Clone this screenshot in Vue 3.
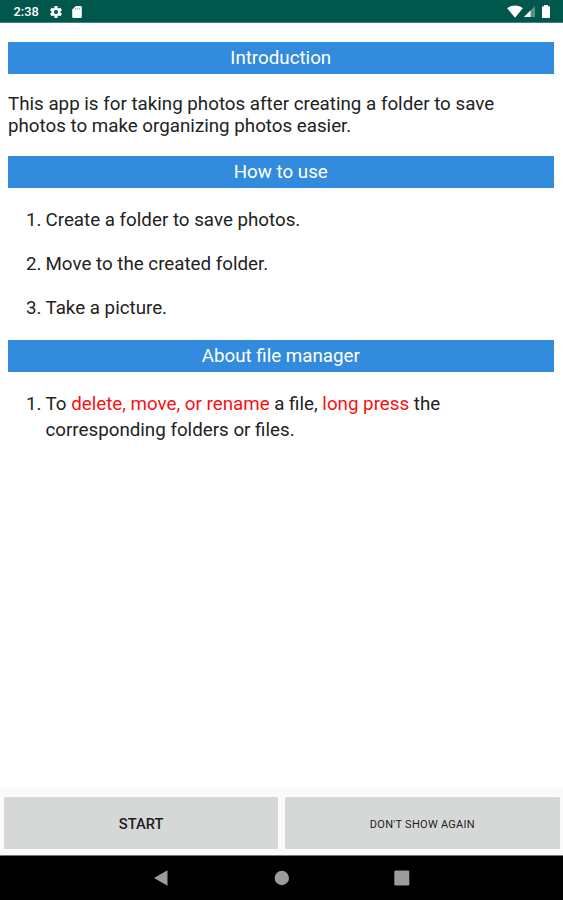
<script setup>
const steps = [
  'Create a folder to save photos.',
  'Move to the created folder.',
  'Take a picture.',
]
</script>

<template>
  <div class="screen">
    <header class="status-bar">
      <span class="clock">2:38</span>
      <svg class="gear" viewBox="2 2 20 20">
        <path d="M19.43 12.98c.04-.32.07-.64.07-.98s-.03-.66-.07-.98l2.11-1.65c.19-.15.24-.42.12-.64l-2-3.46c-.12-.22-.39-.3-.61-.22l-2.49 1c-.52-.4-1.08-.73-1.69-.98l-.38-2.65A.49.49 0 0 0 14 2h-4c-.25 0-.46.18-.49.42l-.38 2.65c-.61.25-1.17.59-1.69.98l-2.49-1c-.23-.09-.49 0-.61.22l-2 3.46c-.13.22-.07.49.12.64l2.11 1.65c-.04.32-.07.65-.07.98s.03.66.07.98l-2.11 1.65c-.19.15-.24.42-.12.64l2 3.46c.12.22.39.3.61.22l2.49-1c.52.4 1.08.73 1.69.98l.38 2.65c.03.24.24.42.49.42h4c.25 0 .46-.18.49-.42l.38-2.65c.61-.25 1.17-.59 1.69-.98l2.49 1c.23.09.49 0 .61-.22l2-3.46c.12-.22.07-.49-.12-.64l-2.11-1.65zM12 15.5a3.5 3.5 0 1 1 0-7 3.5 3.5 0 0 1 0 7z" />
      </svg>
      <svg class="sd" viewBox="4 2 16 20">
        <path d="M18 2h-8L4 8v12a2 2 0 0 0 2 2h12a2 2 0 0 0 2-2V4a2 2 0 0 0-2-2z" />
        <path class="pins" d="M9.5 5v3M12.7 5v3M16 5v3" />
      </svg>
      <span class="spacer" />
      <svg class="wifi" viewBox="0 0 16 13">
        <path d="M8 12.800.2 3.200C2.400 1.500 5 .6 8 .6s5.600.9 7.800 2.600z" />
      </svg>
      <svg class="signal" viewBox="0 0 11 11">
        <path opacity=".35" d="M11 0v11H0z" />
        <path d="M6.500 4.500V11H0z" />
      </svg>
      <svg class="battery" viewBox="0 0 8 13">
        <path d="M2 0h4v1.200H7.200a.8.8 0 0 1 .8.8v10.200a.8.8 0 0 1-.8.8H.8a.8.8 0 0 1-.8-.8V2a.8.8 0 0 1 .8-.8H2z" />
      </svg>
    </header>

    <main class="content">
      <h2>Introduction</h2>
      <p>This app is for taking photos after creating a folder to save<br>photos to make organizing photos easier.</p>

      <h2>How to use</h2>
      <ol class="steps">
        <li v-for="(step, i) in steps" :key="step">
          <span class="num">{{ i + 1 }}.</span>
          <span>{{ step }}</span>
        </li>
      </ol>

      <h2>About file manager</h2>
      <ol class="about">
        <li>
          <span class="num">1.</span>
          <span>To <em>delete, move, or rename</em> a file, <em>long press</em> the<br>corresponding folders or files.</span>
        </li>
      </ol>
    </main>

    <footer class="actions">
      <button class="start">START</button>
      <button class="dismiss">DON'T SHOW AGAIN</button>
    </footer>

    <nav class="nav-bar">
      <svg viewBox="0 0 16 16"><path d="M13.500 .3v15.400L0 8z" /></svg>
      <svg viewBox="0 0 16 16"><circle cx="7.800" cy="8" r="7.200" /></svg>
      <svg viewBox="0 0 16 16"><rect x=".3" y=".5" width="15" height="15" rx="1.300" /></svg>
    </nav>
  </div>
</template>

<style>
body { margin:0; }
</style>

<style scoped>
.screen {
  display:flex; flex-direction:column;
  width:563px; height:900px; overflow:hidden;
  background:#fff; color:#222;
  font-family:Roboto, sans-serif;
}

.status-bar {
  box-sizing:border-box; flex:none;
  display:flex; align-items:center;
  height:23px; padding:1px 13px 0 13.500px;
  background:#00574b; border-bottom:1px solid #4d8177;
}
.status-bar svg { fill:#fff; flex:none; }
.clock { width:36.500px; color:#fff; font-size:12.800px; font-weight:500; line-height:20px; padding-top:1px; }
.gear { width:12px; height:12px; }
.sd { width:10px; height:12px; margin-left:10px; }
.sd .pins { stroke:#00574b; stroke-width:1.200; opacity:.6; }
.spacer { flex:1; }
.wifi { width:16px; height:13px; }
.signal { width:11px; height:11px; margin-left:1px; }
.battery { width:8px; height:13px; margin-left:7px; }

.content { flex:1; padding:19px 9.500px 0 8px; }
h2 {
  box-sizing:border-box; height:31.500px; margin:0; padding-top:1px;
  background:#328bdd; color:#fff;
  font-size:18.750px; font-weight:400; line-height:31.500px; text-align:center;
}
p { margin:19px 0 18.500px; font-size:18.760px; line-height:22.500px; white-space:nowrap; }
ol { margin:0; padding:0 0 0 18px; list-style:none; font-size:18.750px; }
li { display:flex; white-space:nowrap; }
.num { flex:none; width:19.500px; }
.steps { padding-top:10.500px; padding-bottom:10px; }
.steps li { line-height:44px; }
.about { padding-top:19.500px; }
.about li { line-height:26px; }
em { color:#fb1010; font-style:normal; }

.actions {
  box-sizing:border-box; flex:none;
  display:flex; gap:7px;
  height:67px; padding:9px 3.500px 6px 4px;
  background:#fafafa;
}
.actions button {
  flex:1; padding:2px 0 0; border:none; border-radius:1.500px;
  background:#d6d8d7; color:#1c1c1c;
  font-family:inherit;
}
.start { font-size:14.700px; font-weight:500; }
.dismiss { font-size:11px; font-weight:400; letter-spacing:.28px; }

.nav-bar {
  box-sizing:border-box; flex:none;
  display:flex; justify-content:center; align-items:center; gap:104px;
  height:45px; border-top:1px solid #777;
  background:#000;
}
.nav-bar svg { width:16px; height:16px; fill:#9c9c9c; }
</style>
